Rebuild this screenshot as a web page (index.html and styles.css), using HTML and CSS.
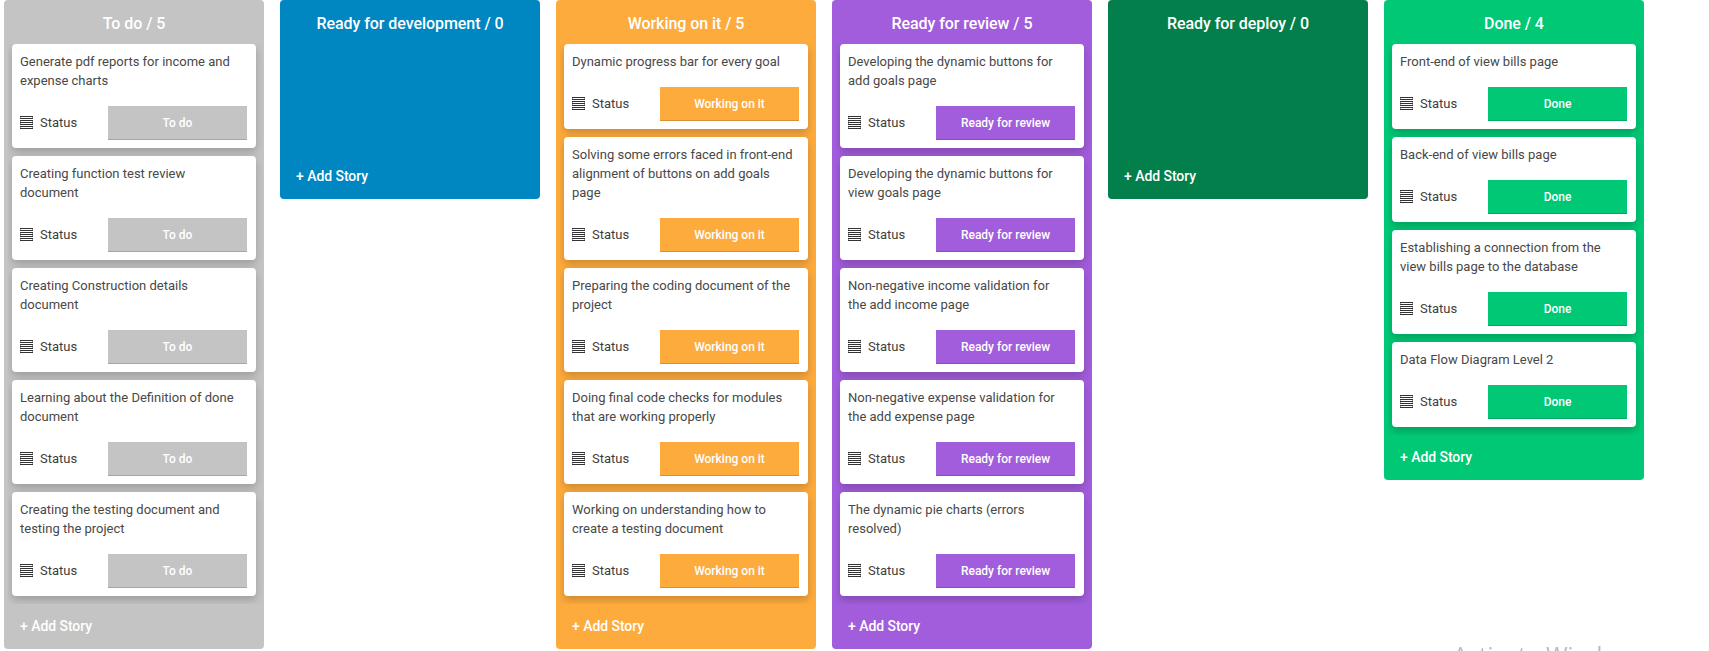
FILE: index.html
```
<!DOCTYPE html>
<html lang="en">
<head>
<meta charset="utf-8">
<title>Board</title>
<link rel="stylesheet" href="styles.css">
</head>
<body>
<svg class="defs" width="0" height="0">
  <symbol id="status-icon" viewBox="0 0 13 13">
    <path d="M0 .5h13M0 2.5h13M0 4.5h13M0 6.5h13M0 8.5h13M0 10.5h13M0 12.5h13" stroke="#333" fill="none"/>
    <path d="M.5 1v1M12.5 1v1M.5 5v1M12.5 5v1M.5 7v1M12.5 7v1M.5 11v1M12.5 11v1" stroke="#333" stroke-opacity=".5" fill="none"/>
  </symbol>
</svg>
<main class="board" id="board"></main>
<div class="watermark">Activate Windows</div>
<script src="board.js"></script>
</body>
</html>
```
FILE: styles.css
```
* { box-sizing: border-box; }
html, body { height: 100%; }
body {
  margin: 0;
  overflow: hidden;
  background: #fff;
  font-family: Roboto, "Liberation Sans", sans-serif;
  color: #333;
}
.defs { position: absolute; }
.board {
  display: flex;
  align-items: flex-start;
  gap: 16px;
  padding-left: 4px;
}
.column {
  flex: none;
  width: 260px;
  border-radius: 4px;
  background: var(--color);
  color: #fff;
}
.column--todo { --color: #c4c4c4; }
.column--dev { --color: #0086c0; }
.column--working { --color: #fdab3d; }
.column--review { --color: #a25ddc; }
.column--deploy { --color: #037f4c; }
.column--done { --color: #00c875; }
.column__title {
  margin: 0;
  height: 44px;
  padding-top: 3px;
  line-height: 41px;
  text-align: center;
  font-size: 16px;
  font-weight: 500;
  letter-spacing: -.06px;
}
.column__list {
  display: flex;
  flex-direction: column;
  gap: 8px;
  min-height: 110px;
  margin-left: 4px;
  padding: 0 8px 8px 4px;
  overflow: hidden;
}
.column__add {
  height: 45px;
  padding-left: 16px;
  line-height: 44px;
  font-size: 14px;
  font-weight: 500;
  letter-spacing: -.05px;
}
.card {
  flex: none;
  padding: 8px 9px 8px 8px;
  border-radius: 4px;
  background: #fff;
  color: #333;
  box-shadow: 0 4px 8px rgba(0, 0, 0, .2);
}
.card__text {
  margin: 0 0 16px;
  padding-right: 5px;
  font-size: 13px;
  line-height: 19px;
  color: #484848;
}
.card__row {
  display: flex;
  align-items: center;
  height: 34px;
}
.card__icon {
  width: 13px;
  height: 13px;
  margin-bottom: 1px;
}
.card__label {
  margin: 0 0 2px 7px;
  font-size: 13px;
  color: #404040;
}
.card__status {
  width: 139px;
  height: 34px;
  margin-left: auto;
  border-bottom: 1px solid rgba(0, 0, 0, .15);
  background: var(--color);
  color: #fff;
  text-align: center;
  font-size: 12px;
  font-weight: 500;
  line-height: 34px;
}
.watermark {
  position: fixed;
  left: 1453px;
  top: 639px;
  font-family: "Open Sans", sans-serif;
  font-size: 23.5px;
  line-height: 32px;
  color: #bbb;
  white-space: nowrap;
}
```
FILE: board.js
```
const columns = [
  ["todo", "To do", [
    "Generate pdf reports for income and expense charts",
    "Creating function test review document",
    "Creating Construction details document",
    "Learning about the Definition of done document",
    "Creating the testing document and testing the project"]],
  ["dev", "Ready for development", []],
  ["working", "Working on it", [
    "Dynamic progress bar for every goal",
    "Solving some errors faced in front-end alignment of buttons on add goals page",
    "Preparing the coding document of the project",
    "Doing final code checks for modules that are working properly",
    "Working on understanding how to create a testing document"]],
  ["review", "Ready for review", [
    "Developing the dynamic buttons for add goals page",
    "Developing the dynamic buttons for view goals page",
    "Non-negative income validation for the add income page",
    "Non-negative expense validation for the add expense page",
    "The dynamic pie charts (errors resolved)"]],
  ["deploy", "Ready for deploy", []],
  ["done", "Done", [
    "Front-end of view bills page",
    "Back-end of view bills page",
    "Establishing a connection from the view bills page to the database",
    "Data Flow Diagram Level 2"]]
];

const card = (text, status) => `
  <article class="card">
    <p class="card__text">${text}</p>
    <div class="card__row">
      <svg class="card__icon"><use href="#status-icon"/></svg>
      <span class="card__label">Status</span>
      <div class="card__status">${status}</div>
    </div>
  </article>`;

document.getElementById("board").innerHTML = columns.map(([key, name, stories]) => `
  <section class="column column--${key}">
    <h2 class="column__title">${name} / ${stories.length}</h2>
    <div class="column__list">${stories.map(s => card(s, name)).join("")}</div>
    <div class="column__add">+ Add Story</div>
  </section>`).join("");
```
